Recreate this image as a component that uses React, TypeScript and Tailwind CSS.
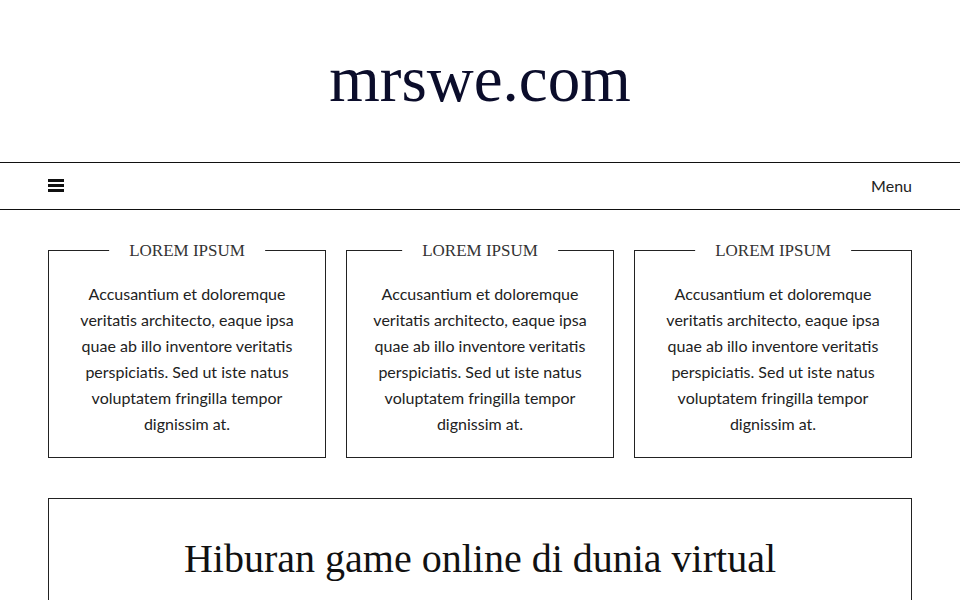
const cards = [
  { title: "LOREM IPSUM", width: "w-[278px]" },
  { title: "LOREM IPSUM", width: "w-[268px]" },
  { title: "LOREM IPSUM", width: "w-[278px]" },
];

const body =
  "Accusantium et doloremque veritatis architecto, eaque ipsa quae ab illo inventore veritatis perspiciatis. Sed ut iste natus voluptatem fringilla tempor dignissim at.";

export default function App() {
  return (
    <div className="min-h-[600px] bg-white font-['Lato',sans-serif] text-[#222]">
      {/* header */}
      <header className="h-[162px] flex items-center justify-center">
        <h1 className="font-['Liberation_Serif',serif] text-[65px] leading-none text-[#0b0d2b] -mt-[4px]">
          mrswe.com
        </h1>
      </header>

      {/* nav */}
      <nav className="border-y border-[#111] h-[48px] flex items-center justify-between px-[48px]">
        <svg width="16" height="13" viewBox="0 0 16 13" className="-mt-[1px]">
          <rect x="0" y="0" width="16" height="3" fill="#111" />
          <rect x="0" y="5" width="16" height="3" fill="#111" />
          <rect x="0" y="10" width="16" height="3" fill="#111" />
        </svg>
        <span className="text-[16px] text-[#222] -mt-[1px]">Menu</span>
      </nav>

      <main className="px-[48px] pt-[40px]">
        <div className="flex justify-between">
          {cards.map((card, i) => (
            <div
              key={i}
              className={`relative border border-[#222] ${card.width} pt-[30px] pb-[20px]`}
            >
              <h3 className="absolute left-1/2 -translate-x-1/2 -top-[10px] bg-white px-5 whitespace-nowrap font-['Liberation_Serif',serif] text-[17px] leading-[20px] text-[#333]">
                {card.title}
              </h3>
              <p className="max-w-[216px] mx-auto text-center text-[16px] leading-[26px] text-[#222]">
                {body}
              </p>
            </div>
          ))}
        </div>

        <section className="mt-[40px] border border-[#222] border-b-0 pt-[36px] pb-[40px]">
          <h2 className="text-center font-['Liberation_Serif',serif] text-[40px] leading-[48px] text-[#111]">
            Hiburan game online di dunia virtual
          </h2>
        </section>
      </main>
    </div>
  );
}
